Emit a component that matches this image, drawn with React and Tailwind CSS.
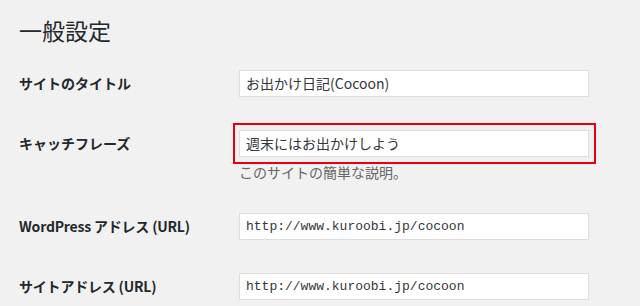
import React from "react";

const jp = { fontFamily: '"Noto Sans CJK JP", "Noto Sans", sans-serif' };

const Field = ({ value, mono }) => (
  <div
    className={`w-[350px] h-[27px] bg-white border border-[#dddddd] flex items-center pl-[6px] text-[#32373c] ${
      mono ? "text-[13px]" : "text-[14px]"
    }`}
    style={mono ? { fontFamily: '"Liberation Mono", "DejaVu Sans Mono", monospace' } : jp}
  >
    {value}
  </div>
);

const Label = ({ children, semi }) => (
  <div
    className={`w-[220px] shrink-0 text-[14px] text-[#23282d] ${
      semi ? "font-semibold tracking-[-0.2px]" : "font-bold"
    }`}
  >
    {children}
  </div>
);

export default function App() {
  return (
    <div className="w-[640px] h-[306px] overflow-hidden bg-[#f1f1f1] pl-[19px]" style={jp}>
      <h1 className="pt-[13px] text-[23px] leading-[34px] font-normal text-[#23282d]">一般設定</h1>

      <div className="flex items-center mt-[23px]">
        <Label>サイトのタイトル</Label>
        <Field value="お出かけ日記(Cocoon)" />
      </div>

      <div className="flex mt-[26px]">
        <div className="w-[214px] shrink-0 h-[41px] flex items-center text-[14px] font-bold text-[#23282d]">
          キャッチフレーズ
        </div>
        <div className="flex flex-col">
          <div className="border-2 border-[#e60012] pt-[5px] pb-[5px] pl-[4px] pr-[5px]">
            <Field value="週末にはお出かけしよう" />
          </div>
          <p className="pl-[6px] mt-[0px] text-[14px] leading-[17px] text-[#666666]">このサイトの簡単な説明。</p>
        </div>
      </div>

      <div className="flex items-center mt-[32px]">
        <Label semi>WordPress アドレス (URL)</Label>
        <Field value="http://www.kuroobi.jp/cocoon" mono />
      </div>

      <div className="flex items-center mt-[33px]">
        <Label semi>サイトアドレス (URL)</Label>
        <Field value="http://www.kuroobi.jp/cocoon" mono />
      </div>
    </div>
  );
}
